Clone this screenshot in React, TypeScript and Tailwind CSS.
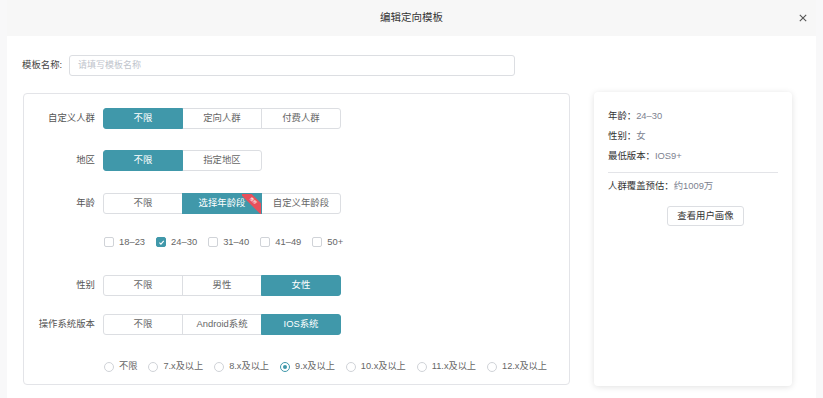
import React from "react";

const TEAL = "bg-[#4098aa]";

type SegProps = { options: string[]; active: number; badge?: number };

const Segmented = ({ options, active, badge }: SegProps) => (
  <div className="flex h-[21px]">
    {options.map((opt, i) => (
      <div
        key={opt}
        className={`relative w-[80px] flex items-center justify-center border text-[9.4px] ${
          i > 0 ? "-ml-px" : ""
        } ${i === 0 ? "rounded-l-[3px]" : ""} ${i === options.length - 1 ? "rounded-r-[3px]" : ""} ${
          i === active ? `${TEAL} border-[#4098aa] text-white z-10` : "bg-white border-[#dcdee2] text-[#666]"
        }`}
      >
        {opt}
        {badge === i && (
          <div className="absolute right-0 top-0 w-[19px] h-[20px] overflow-hidden">
            <div className="absolute -right-[8px] top-[3px] w-[32px] h-[8px] bg-[#e8505b] rotate-45 flex items-center justify-center text-[4px] leading-none text-white">
              推荐
            </div>
          </div>
        )}
      </div>
    ))}
  </div>
);

const Row = ({ label, children, className = "" }: { label: string; children: React.ReactNode; className?: string }) => (
  <div className={`flex items-center ${className}`}>
    <div className="w-[72px] pr-[1px] text-right text-[9.4px] text-[#555]">{label}</div>
    <div className="ml-[7px]">{children}</div>
  </div>
);

const Check = ({ label, checked }: { label: string; checked?: boolean }) => (
  <div className="flex items-center gap-[5px]">
    <div
      className={`w-[10px] h-[10px] rounded-[2px] border flex items-center justify-center ${
        checked ? `${TEAL} border-[#4098aa]` : "border-[#d0d3d8] bg-white"
      }`}
    >
      {checked && (
        <svg width="7" height="7" viewBox="0 0 10 10">
          <path d="M2 5.2 L4.2 7.3 L8.2 2.8" fill="none" stroke="white" strokeWidth="1.6" />
        </svg>
      )}
    </div>
    <span className="text-[9.4px] text-[#666]">{label}</span>
  </div>
);

const Radio = ({ label, checked }: { label: string; checked?: boolean }) => (
  <div className="flex items-center gap-[5px]">
    <div
      className={`w-[10px] h-[10px] rounded-full border flex items-center justify-center bg-white ${
        checked ? "border-[#4098aa]" : "border-[#d0d3d8]"
      }`}
    >
      {checked && <div className={`w-[4px] h-[4px] rounded-full ${TEAL}`} />}
    </div>
    <span className="text-[9.2px] text-[#666]">{label}</span>
  </div>
);

export default function App() {
  return (
    <div
      className="w-[823px] h-[398px] overflow-hidden bg-[#f8f8f9] relative"
      style={{ fontFamily: '"Liberation Sans", "Noto Sans CJK SC", sans-serif' }}
    >
      <div className="absolute left-[650px] top-0 w-[166px] h-[2px] flex border-b border-[#d8d8d8] bg-white">
        {[0, 1, 2, 3, 4].map((c) => (
          <div key={c} className="flex-1 border-l border-[#d8d8d8] last:border-r" />
        ))}
      </div>

      <div className="ml-[7px] w-[809px] h-full flex flex-col">
        <div className="h-[36px] shrink-0 bg-[#f7f7f7] flex items-center justify-center relative">
          <span className="text-[10.5px] text-[#333]">编辑定向模板</span>
          <svg className="absolute right-[9px] top-[14px]" width="8" height="8" viewBox="0 0 8 8">
            <path d="M0.8 0.8 L7.2 7.2 M7.2 0.8 L0.8 7.2" stroke="#555" strokeWidth="1.1" />
          </svg>
        </div>

        <div className="flex-1 bg-white pl-[15px]">
          <div className="flex items-center mt-[19px]">
            <span className="text-[9.4px] text-[#444]">模板名称:</span>
            <div className="ml-[7px] w-[446px] h-[21px] border border-[#dcdee2] rounded-[3px] flex items-center pl-[8px] text-[9px] text-[#c0c4cc]">
              请填写模板名称
            </div>
          </div>

          <div className="flex mt-[17px] gap-[24px]">
            <div className="ml-[1px] w-[547px] h-[292px] border border-[#e3e4e8] rounded-[4px] flex flex-col pt-[14px]">
              <Row label="自定义人群">
                <Segmented options={["不限", "定向人群", "付费人群"]} active={0} />
              </Row>
              <Row label="地区" className="mt-[21px]">
                <Segmented options={["不限", "指定地区"]} active={0} />
              </Row>
              <Row label="年龄" className="mt-[22px]">
                <Segmented options={["不限", "选择年龄段", "自定义年龄段"]} active={1} badge={1} />
              </Row>
              <div className="flex items-center gap-[11px] mt-[22px] ml-[80px] h-[12px]">
                <Check label="18–23" />
                <Check label="24–30" checked />
                <Check label="31–40" />
                <Check label="41–49" />
                <Check label="50+" />
              </div>
              <Row label="性别" className="mt-[27px]">
                <Segmented options={["不限", "男性", "女性"]} active={2} />
              </Row>
              <Row label="操作系统版本" className="mt-[18px]">
                <Segmented options={["不限", "Android系统", "IOS系统"]} active={2} />
              </Row>
              <div className="flex items-center gap-[11px] mt-[26px] ml-[80px] h-[12px]">
                <Radio label="不限" />
                <Radio label="7.x及以上" />
                <Radio label="8.x及以上" />
                <Radio label="9.x及以上" checked />
                <Radio label="10.x及以上" />
                <Radio label="11.x及以上" />
                <Radio label="12.x及以上" />
              </div>
            </div>

            <div className="w-[198px] h-[294px] -mt-px bg-white rounded-[4px] shadow-[0_1px_6px_rgba(0,0,0,0.12)] px-[14px] pt-[14px] text-[9.4px] leading-[20px]">
              <div>
                <span className="text-[#333]">年龄：</span>
                <span className="text-[#7d8290]">24–30</span>
              </div>
              <div>
                <span className="text-[#333]">性别：</span>
                <span className="text-[#7d8290]">女</span>
              </div>
              <div>
                <span className="text-[#333]">最低版本：</span>
                <span className="text-[#7d8290]">IOS9+</span>
              </div>
              <div className="mt-[6px] border-t border-[#e3e4e8]" />
              <div className="mt-[3px]">
                <span className="text-[#333]">人群覆盖预估：</span>
                <span className="text-[#7d8290]">约1009万</span>
              </div>
              <div className="mt-[10px] ml-[59px] w-[77px] h-[20px] border border-[#dcdee2] rounded-[3px] flex items-center justify-center text-[#333] leading-none">
                查看用户画像
              </div>
            </div>
          </div>
        </div>
      </div>
    </div>
  );
}
